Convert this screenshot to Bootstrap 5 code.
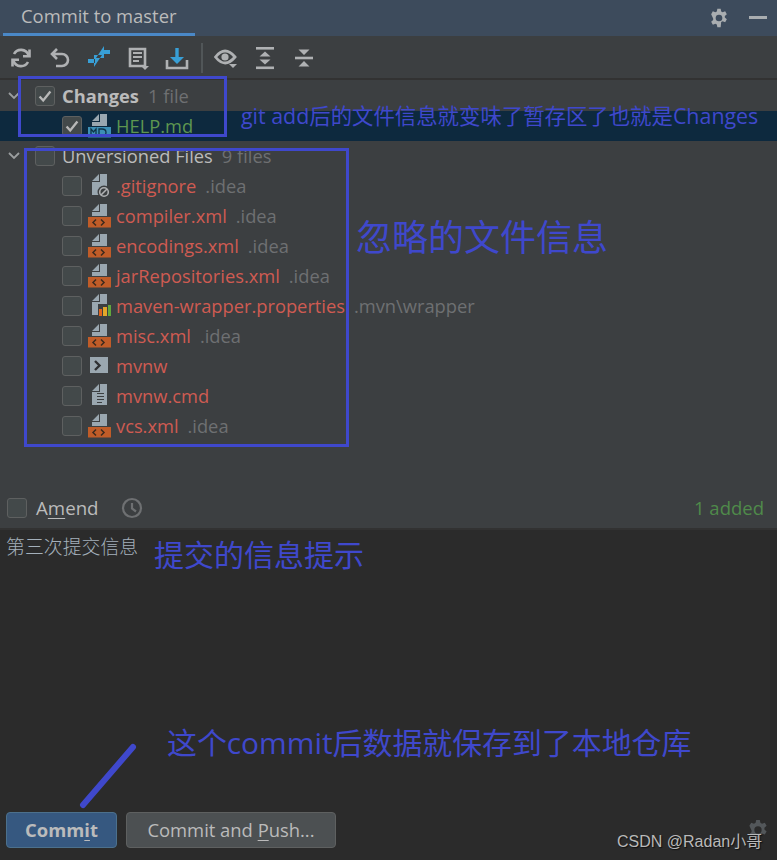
<!DOCTYPE html>
<html lang="en"><head><meta charset="utf-8"><title>Commit</title>
<link rel="stylesheet" href="https://cdn.jsdelivr.net/npm/bootstrap@5.3.0/dist/css/bootstrap.min.css">
<style>
html,body{margin:0;background:#2b2b2b}
.ide{position:relative;width:777px;height:860px;overflow:hidden;font-family:"Open Sans","Noto Sans","Noto Sans CJK SC",sans-serif;font-size:18.3px;color:#bbb;line-height:30px}
.tabbar{height:36px;background:#3d4b5c}
.tabitem{margin-left:3px;padding:0 18px;width:192px;height:36px;border-bottom:3px solid #4a88c7;line-height:32px;color:#bbb;white-space:nowrap;font-size:18.4px}
.tabact{margin-right:10px;gap:20px}
.toolstrip{height:44px;background:#3c3f41;border-bottom:2px solid #323232;padding:1px 0 0 1px}
.toolcell{width:39px;height:40px}
.toolsep{width:2px;height:30px;background:#515658;margin:0 3px 0 5px}
.treepane{height:361px;background:#3c3f41;padding-top:1px}
.treerow{height:30px;white-space:nowrap}
.rowsel{background:#0d293e}
.chev{width:14px;margin:0 14px 0 7px}
.cbox{width:20px;height:20px;border:1.5px solid #5e6060;border-radius:3px;background:#43494a;flex:none;display:flex;align-items:center;justify-content:center}
.lvl0 .cbox{margin-right:7px}
.lvl1{padding-left:62px}
.lvl1 .cbox{margin-right:6px}
.ficon{width:24px;height:24px;margin-right:4px;flex:none}
.fred{color:#cf5b52}.fdim{color:#6e7072;margin-left:9px}.fgreen{color:#5e9650}
.amendbar{height:87px;background:#3c3f41;padding:0 13px 5px 7px}
.amendbar u{text-underline-offset:3px}
.amendlabel{margin-left:1px;font-size:18.7px}
.clockwrap{margin-left:22px}
.addedtxt{color:#4f8a4a;font-size:18.5px}
.editorpane{background:#2b2b2b;border-top:2px solid #323232;padding:1px 7px 12px 6px}
.msgtxt{font-family:"Noto Sans CJK SC",sans-serif;font-size:18.9px;font-weight:300;color:#a4b0bb}
.actbtn{height:36px;font-size:18.4px;line-height:1;padding:0;border-radius:4px;color:#bbb;--bs-btn-color:#bbb}
.actmain{width:111px;background:#365880;border:1.5px solid #4c708c;font-weight:700}
.actalt{width:210px;background:#4c5052;border:1.5px solid #5e6060;margin-left:9px}
.actbtn u{text-underline-offset:3px}
.markbox{position:absolute;border:3px solid #3f48cc}
.markone{left:18px;top:76px;width:209px;height:61px}
.marktwo{left:24px;top:148px;width:325px;height:299px}
.marktxt{position:absolute;color:#3f48cc;font-family:"Noto Sans CJK SC",sans-serif;white-space:nowrap;line-height:1.2}
.mk1{left:241px;top:103px;font-size:21.4px;font-family:"Open Sans","Noto Sans CJK SC",sans-serif}
.mk2{left:356px;top:214px;font-size:36px}
.mk3{left:154px;top:535px;font-size:30px}
.mk4{left:167px;top:725px;font-size:29.9px;font-family:"Open Sans","Noto Sans CJK SC",sans-serif}
.markline{position:absolute;left:70px;top:735px;width:75px;height:85px}
.wmark{position:absolute;left:617px;top:832px;font:16px/20px "Liberation Sans","Noto Sans CJK SC",sans-serif;color:#b9b9b9;white-space:nowrap;text-shadow:1px 1px 1px #111}
.gearlow{position:absolute;left:747px;top:819px;width:22px;height:22px}
</style></head>
<body>
<svg width="0" height="0" class="d-none">
<defs>
<symbol id="gear" viewBox="0 0 24 24"><path fill="currentColor" fill-rule="evenodd" d="M10 1h4l.6 3.2 1.8 1 3-1.2 2 3.4-2.4 2.1v2l2.4 2.1-2 3.4-3-1.2-1.8 1L14 23h-4l-.6-3.2-1.8-1-3 1.200-2-3.400 2.400-2.100v-2L2.600 7.400l2-3.400 3 1.200 1.800-1zM12 8a4 4 0 1 0 0 8 4 4 0 0 0 0-8z"/></symbol>
<symbol id="chk" viewBox="0 0 20 20"><path d="M4 10.500l4 4.500 8-10" fill="none" stroke="#b8b8b8" stroke-width="2.600"/></symbol>
<symbol id="sheet" viewBox="0 0 24 24"><path fill="#9aa7b0" d="M12 0h7v21H4V8h8zM4 7l7-7v7z"/></symbol>
<symbol id="xmlf" viewBox="0 0 24 24"><path fill="#9aa7b0" d="M12 0h7v12H4V8h8zM4 7l7-7v7z"/><rect y="13" width="23" height="10.500" fill="#c05c28"/><path d="M8 15.500l-3 3 3 3M13 15.500l3 3-3 3" fill="none" stroke="#3c2a1e" stroke-width="1.500"/></symbol>
</defs></svg>
<div class="ide d-flex flex-column">
  <div class="tabbar d-flex justify-content-between">
    <div class="tabitem">Commit to master</div>
    <div class="tabact d-flex align-items-center">
      <svg width="20" height="20" color="#a9adb0"><use href="#gear"/></svg>
      <svg width="18" height="4"><rect width="18" height="3" fill="#a9adb0"/></svg>
    </div>
  </div>
  <div class="toolstrip d-flex align-items-center">
    <div class="toolcell d-flex align-items-center justify-content-center"><svg width="22" height="22" viewBox="0 0 22 22" fill="none" stroke="#afb1b3" stroke-width="2.600"><path d="M18.500 8A8 8 0 0 0 4 7M3.500 14A8 8 0 0 0 18 15"/><path d="M19.500 2.500v6.700h-6.500M2.500 19.500v-6.700H9"/></svg></div>
    <div class="toolcell d-flex align-items-center justify-content-center"><svg width="22" height="22" viewBox="0 0 22 22" fill="none" stroke="#afb1b3" stroke-width="2.600"><path d="M8 2L3 7l5 5M3 7h10a6 6 0 0 1 0 12H7"/></svg></div>
    <div class="toolcell d-flex align-items-center justify-content-center"><svg width="24" height="24" viewBox="0 0 24 24" fill="#389fd6"><path d="M16 4h7v4h-7zM17 0v12H9zM1 13h7v4H1zM7 9v12l8-12z"/></svg></div>
    <div class="toolcell d-flex align-items-center justify-content-center"><svg width="24" height="24" viewBox="0 0 24 24" fill="none"><path d="M4 3h15v17H4z" stroke="#afb1b3" stroke-width="2.600"/><path d="M7 7h9M7 11h9M7 15h6" stroke="#afb1b3" stroke-width="1.800"/><path d="M15 20h8l-4 4z" fill="#afb1b3"/></svg></div>
    <div class="toolcell d-flex align-items-center justify-content-center"><svg width="24" height="24" viewBox="0 0 24 24" fill="none"><path d="M2 14v8h20v-8" stroke="#afb1b3" stroke-width="2.600"/><path d="M12 2v12" stroke="#389fd6" stroke-width="3.400"/><path d="M5 11h14l-7 7z" fill="#389fd6"/></svg></div>
    <div class="toolsep"></div>
    <div class="toolcell d-flex align-items-center justify-content-center"><svg width="24" height="24" viewBox="0 0 24 24" fill="none"><path d="M1.500 11Q11-1 21 11 11 23 1.500 11z" stroke="#afb1b3" stroke-width="2.800"/><circle cx="11" cy="11" r="3.600" fill="#afb1b3"/><path d="M15 18h8l-4 4z" fill="#afb1b3"/></svg></div>
    <div class="toolcell d-flex align-items-center justify-content-center"><svg width="20" height="24" viewBox="0 0 20 24" fill="#afb1b3"><rect x="1" y="1" width="18" height="2.600"/><rect x="1" y="20.500" width="18" height="2.600"/><path d="M10 5.500l5.500 5h-11zM10 18.500l-5.500-5h11z"/></svg></div>
    <div class="toolcell d-flex align-items-center justify-content-center"><svg width="20" height="24" viewBox="0 0 20 24" fill="#afb1b3"><rect x="1" y="10.700" width="18" height="2.600"/><path d="M10 9l-5.500-5.500h11zM10 15l5.500 5.500h-11z"/></svg></div>
  </div>
  <div class="treepane">
    <div class="treerow lvl0 d-flex align-items-center">
      <svg class="chev" height="8" viewBox="0 0 14 8" fill="none" stroke="#9b9e9f" stroke-width="1.800"><path d="M2 1l5 5 5-5"/></svg>
      <span class="cbox"><svg width="18" height="18"><use href="#chk"/></svg></span>
      <span class="fw-bold">Changes</span><span class="fdim">1 file</span>
    </div>
    <div class="treerow rowsel lvl1 d-flex align-items-center">
      <span class="cbox"><svg width="18" height="18"><use href="#chk"/></svg></span>
      <svg class="ficon" viewBox="0 0 24 24"><path fill="#9aa7b0" d="M12 0h7v12H4V8h8zM4 7l7-7v7z"/><rect y="13" width="23" height="10.500" fill="#3d8fb5"/><path d="M3 22v-7l2.500 3 2.500-3v7M11 15v7h3q4 0 4-3.500T14 15z" fill="none" stroke="#0f3448" stroke-width="1.300"/></svg>
      <span class="fgreen">HELP.md</span>
    </div>
    <div class="treerow lvl0 d-flex align-items-center">
      <svg class="chev" height="8" viewBox="0 0 14 8" fill="none" stroke="#9b9e9f" stroke-width="1.800"><path d="M2 1l5 5 5-5"/></svg>
      <span class="cbox"></span>
      <span>Unversioned Files</span><span class="fdim">9 files</span>
    </div>
    <div class="treerow lvl1 d-flex align-items-center">
      <span class="cbox"></span>
      <svg class="ficon" viewBox="0 0 24 24"><use href="#sheet"/><circle cx="16" cy="18" r="6.500" fill="#3c3f41"/><circle cx="16" cy="18" r="4.300" fill="none" stroke="#afb1b3" stroke-width="1.600"/><path d="M13 21l6-6" stroke="#afb1b3" stroke-width="1.600"/></svg>
      <span class="fred">.gitignore</span><span class="fdim">.idea</span>
    </div>
    <div class="treerow lvl1 d-flex align-items-center"><span class="cbox"></span><svg class="ficon"><use href="#xmlf"/></svg><span class="fred">compiler.xml</span><span class="fdim">.idea</span></div>
    <div class="treerow lvl1 d-flex align-items-center"><span class="cbox"></span><svg class="ficon"><use href="#xmlf"/></svg><span class="fred">encodings.xml</span><span class="fdim">.idea</span></div>
    <div class="treerow lvl1 d-flex align-items-center"><span class="cbox"></span><svg class="ficon"><use href="#xmlf"/></svg><span class="fred">jarRepositories.xml</span><span class="fdim">.idea</span></div>
    <div class="treerow lvl1 d-flex align-items-center">
      <span class="cbox"></span>
      <svg class="ficon" viewBox="0 0 24 24"><use href="#sheet"/><rect x="10" y="10" width="14" height="13" fill="#3c3f41"/><rect x="11" y="15" width="3" height="7" fill="#e0641e"/><rect x="15" y="13" width="4" height="9" fill="#e3a72a"/><rect x="20" y="11" width="3" height="11" fill="#62a83c"/></svg>
      <span class="fred">maven-wrapper.properties</span><span class="fdim">.mvn\wrapper</span>
    </div>
    <div class="treerow lvl1 d-flex align-items-center"><span class="cbox"></span><svg class="ficon"><use href="#xmlf"/></svg><span class="fred">misc.xml</span><span class="fdim">.idea</span></div>
    <div class="treerow lvl1 d-flex align-items-center">
      <span class="cbox"></span>
      <svg class="ficon" viewBox="0 0 24 24"><rect x="2" y="3" width="18" height="16" fill="#9aa7b0"/><path d="M7 7l4.500 4.500L7 16" fill="none" stroke="#2f3133" stroke-width="2.400"/></svg>
      <span class="fred">mvnw</span>
    </div>
    <div class="treerow lvl1 d-flex align-items-center">
      <span class="cbox"></span>
      <svg class="ficon" viewBox="0 0 24 24"><use href="#sheet"/><path d="M9 9.500h7M9 12.500h7M9 15.500h7M9 18.500h5" stroke="#3c3f41" stroke-width="1.200"/></svg>
      <span class="fred">mvnw.cmd</span>
    </div>
    <div class="treerow lvl1 d-flex align-items-center"><span class="cbox"></span><svg class="ficon"><use href="#xmlf"/></svg><span class="fred">vcs.xml</span><span class="fdim">.idea</span></div>
  </div>
  <div class="amendbar d-flex align-items-end">
    <div class="d-flex align-items-center w-100">
      <span class="cbox me-2"></span>
      <span class="amendlabel">A<u>m</u>end</span>
      <span class="clockwrap d-flex"><svg width="22" height="22" viewBox="0 0 22 22" fill="none" stroke="#6e7072" stroke-width="2.200"><circle cx="11" cy="11" r="9"/><path d="M11 6v5.500l4 3"/></svg></span>
      <span class="addedtxt ms-auto">1 added</span>
    </div>
  </div>
  <div class="editorpane flex-grow-1 d-flex flex-column">
    <div class="msgtxt">第三次提交信息</div>
    <div class="mt-auto d-flex">
      <button type="button" class="btn actbtn actmain">Comm<u>i</u>t</button>
      <button type="button" class="btn actbtn actalt">Commit and <u>P</u>ush...</button>
    </div>
  </div>
  <div class="markbox markone"></div>
  <div class="markbox marktwo"></div>
  <div class="marktxt mk1">git add后的文件信息就变味了暂存区了也就是Changes</div>
  <div class="marktxt mk2">忽略的文件信息</div>
  <div class="marktxt mk3">提交的信息提示</div>
  <div class="marktxt mk4">这个commit后数据就保存到了本地仓库</div>
  <svg class="markline" viewBox="0 0 75 85"><path d="M63 12L13 70" stroke="#3f48cc" stroke-width="6" stroke-linecap="round"/></svg>
  <svg class="gearlow" color="#53575a"><use href="#gear"/></svg>
  <div class="wmark">CSDN @Radan小哥</div>
</div>
<script src="https://cdn.jsdelivr.net/npm/bootstrap@5.3.0/dist/js/bootstrap.bundle.min.js"></script>
</body></html>
